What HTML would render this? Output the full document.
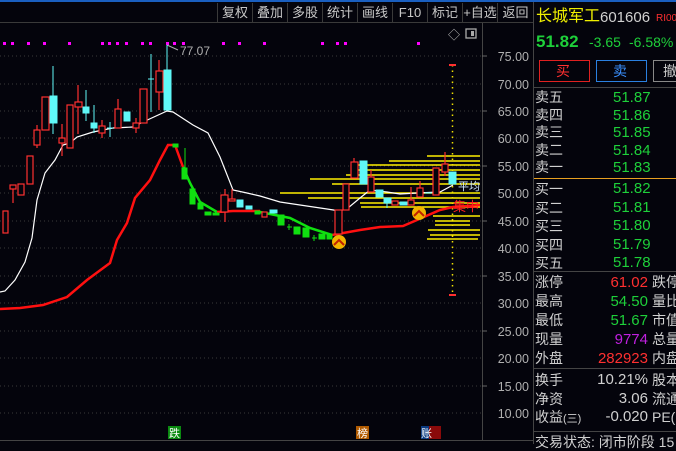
<!DOCTYPE html>
<html><head><meta charset="utf-8"><style>
*{margin:0;padding:0}
body{width:676px;height:444px;background:#04040c;overflow:hidden;position:relative;font-family:"Liberation Sans","Noto Sans CJK SC",sans-serif}
.tb{position:absolute;top:3px;height:19px;color:#c8c8c8;font-size:13px;line-height:19px;text-align:center;border-left:1px solid #3a3a3a}
.r{position:absolute;font-size:14px;line-height:17px;color:#d0d0d0}
.n{font-size:15px}
.g{color:#1ed03a}.rd{color:#ff3030}
</style></head><body>
<div style="position:absolute;left:0;top:0;width:676px;height:2px;background:#1a5fc0"></div>
<div style="position:absolute;left:0;top:22px;width:533px;height:1px;background:#3a3a3a"></div>
<div class="tb" style="left:217px;width:34px">复权</div>
<div class="tb" style="left:252px;width:34px">叠加</div>
<div class="tb" style="left:287px;width:34px">多股</div>
<div class="tb" style="left:322px;width:34px">统计</div>
<div class="tb" style="left:357px;width:34px">画线</div>
<div class="tb" style="left:392px;width:34px">F10</div>
<div class="tb" style="left:427px;width:34px">标记</div>
<div class="tb" style="left:462px;width:34px">+自选</div>
<div class="tb" style="left:497px;width:35px">返回</div>
<svg width="676" height="444" style="position:absolute;left:0;top:0" font-family="Liberation Sans, Noto Sans CJK SC, sans-serif">
<g stroke="#3a3a3a" stroke-dasharray="1,3">
<line x1="0" y1="56" x2="482" y2="56"/><line x1="0" y1="84" x2="482" y2="84"/><line x1="0" y1="111" x2="482" y2="111"/><line x1="0" y1="138" x2="482" y2="138"/><line x1="0" y1="166" x2="482" y2="166"/><line x1="0" y1="193" x2="482" y2="193"/><line x1="0" y1="221" x2="482" y2="221"/><line x1="0" y1="248" x2="482" y2="248"/><line x1="0" y1="276" x2="482" y2="276"/><line x1="0" y1="303" x2="482" y2="303"/><line x1="0" y1="331" x2="482" y2="331"/><line x1="0" y1="358" x2="482" y2="358"/><line x1="0" y1="386" x2="482" y2="386"/><line x1="0" y1="413" x2="482" y2="413"/>
</g>
<line x1="482.5" y1="23" x2="482.5" y2="441" stroke="#444"/>
<line x1="0" y1="440.5" x2="533" y2="440.5" stroke="#444"/>
<line x1="533.5" y1="2" x2="533.5" y2="444" stroke="#444"/>
<g fill="#b0b0b0" font-size="12.5" text-anchor="end">
<text x="529" y="61">75.00</text><text x="529" y="89">70.00</text><text x="529" y="116">65.00</text><text x="529" y="143">60.00</text><text x="529" y="171">55.00</text><text x="529" y="198">50.00</text><text x="529" y="226">45.00</text><text x="529" y="253">40.00</text><text x="529" y="281">35.00</text><text x="529" y="308">30.00</text><text x="529" y="336">25.00</text><text x="529" y="363">20.00</text><text x="529" y="391">15.00</text><text x="529" y="418">10.00</text>
</g>
<g stroke="#666"><line x1="482" y1="56" x2="487" y2="56"/><line x1="482" y1="111" x2="487" y2="111"/><line x1="482" y1="166" x2="487" y2="166"/><line x1="482" y1="221" x2="487" y2="221"/><line x1="482" y1="276" x2="487" y2="276"/><line x1="482" y1="331" x2="487" y2="331"/><line x1="482" y1="386" x2="487" y2="386"/></g>
<text x="448" y="39" fill="#bbb" font-size="12">◇</text>
<rect x="466" y="29" width="10" height="9" fill="none" stroke="#aaa" stroke-width="1.3"/><rect x="471" y="31" width="3" height="5" fill="#aaa"/>
<g fill="#ff00ff">
<rect x="3" y="42" width="3" height="3"/><rect x="11" y="42" width="3" height="3"/><rect x="27" y="42" width="3" height="3"/><rect x="43" y="42" width="3" height="3"/><rect x="68" y="42" width="3" height="3"/><rect x="101" y="42" width="3" height="3"/><rect x="108" y="42" width="3" height="3"/><rect x="116" y="42" width="3" height="3"/><rect x="125" y="42" width="3" height="3"/><rect x="141" y="42" width="3" height="3"/><rect x="149" y="42" width="3" height="3"/><rect x="166" y="42" width="3" height="3"/><rect x="173" y="42" width="3" height="3"/><rect x="182" y="42" width="3" height="3"/><rect x="222" y="42" width="3" height="3"/><rect x="238" y="42" width="3" height="3"/><rect x="263" y="42" width="3" height="3"/><rect x="321" y="42" width="3" height="3"/><rect x="336" y="42" width="3" height="3"/><rect x="344" y="42" width="3" height="3"/><rect x="417" y="42" width="3" height="3"/>
</g>
<text x="180" y="55" fill="#b0b0b0" font-size="12">77.07</text>
<path d="M167 45 L178 50" stroke="#aaa"/>
<g stroke="#ffee00" stroke-width="1.6">
<line x1="427" y1="156" x2="480" y2="156"/><line x1="389" y1="161" x2="480" y2="161"/><line x1="357" y1="165" x2="480" y2="165"/><line x1="356" y1="170" x2="480" y2="170"/><line x1="346" y1="175" x2="480" y2="175"/><line x1="310" y1="179" x2="480" y2="179"/><line x1="332" y1="184" x2="480" y2="184"/><line x1="280" y1="193" x2="480" y2="193"/><line x1="308" y1="198" x2="480" y2="198"/><line x1="360" y1="203" x2="480" y2="203"/><line x1="361" y1="207" x2="480" y2="207"/><line x1="433" y1="216" x2="480" y2="216"/><line x1="435" y1="221" x2="470" y2="221"/><line x1="435" y1="225" x2="470" y2="225"/><line x1="428" y1="230" x2="480" y2="230"/><line x1="430" y1="235" x2="480" y2="235"/><line x1="427" y1="239" x2="478" y2="239"/>
</g>
<line x1="452.5" y1="65" x2="452.5" y2="295" stroke="#f0e000" stroke-width="1.5" stroke-dasharray="1.5,4"/>
<polyline fill="none" stroke="#fff" stroke-width="1.2" points="0,292 5,291 15,280 25,262 32,238 37,200 45,173 55,160 63,145 70,143 77,137 93,132 113,128 133,127 143,122 167,111 173,112 193,125 208,133 220,157 233,190 247,193 260,196 280,202 300,205 327,209 340,211 348,208 360,198 370,190 387,192 400,194 417,193 440,192 453,185"/>
<polyline fill="none" stroke="#ff1010" stroke-width="2.5" points="0,309 20,308 43,305 67,297 87,280 110,263 117,240 127,223 135,198 150,180 160,160 168,145 175,145 183,167"/>
<polyline fill="none" stroke="#10e010" stroke-width="2.5" points="183,167 190,183 200,202 217,212"/>
<polyline fill="none" stroke="#ff1010" stroke-width="2.5" points="217,212 233,211 260,211"/>
<polyline fill="none" stroke="#10e010" stroke-width="2.5" points="260,212 290,218 310,228 332,235"/>
<polyline fill="none" stroke="#ff1010" stroke-width="2.5" points="332,235 360,230 380,227 403,226 417,220 440,210 453,207 480,205"/>
<g stroke="#ff3030" fill="#04040c" stroke-width="1.2">
<rect x="3" y="211" width="5" height="22"/><line x1="13" y1="189" x2="13" y2="203"/><rect x="10" y="185" width="6" height="4"/><rect x="18" y="184" width="6" height="11"/><rect x="27" y="156" width="6" height="28"/><line x1="37" y1="125" x2="37" y2="148"/><rect x="34" y="130" width="6" height="15"/><rect x="42" y="97" width="7" height="33"/>
<line x1="62" y1="124" x2="62" y2="156"/><rect x="59" y="138" width="6" height="5"/><rect x="67" y="105" width="6" height="43"/><line x1="78" y1="85" x2="78" y2="134"/><rect x="75" y="102" width="7" height="5"/><line x1="102" y1="120" x2="102" y2="138"/><rect x="99" y="126" width="6" height="7"/><line x1="118" y1="99" x2="118" y2="128"/><rect x="115" y="109" width="6" height="19"/><line x1="136" y1="118" x2="136" y2="133"/><rect x="133" y="123" width="6" height="5"/><rect x="140" y="89" width="7" height="34"/><line x1="159" y1="60" x2="159" y2="110"/><rect x="156" y="71" width="7" height="21"/>
<line x1="225" y1="189" x2="225" y2="222"/><rect x="221" y="195" width="7" height="17"/><line x1="232" y1="189" x2="232" y2="200"/><rect x="229" y="199" width="6" height="2"/>
<rect x="262" y="212" width="5" height="5"/><rect x="335" y="210" width="7" height="24"/><rect x="343" y="184" width="6" height="26"/><line x1="354" y1="158" x2="354" y2="162"/><rect x="351" y="162" width="7" height="16"/><line x1="371" y1="170" x2="371" y2="177"/><rect x="368" y="177" width="6" height="15"/><rect x="392" y="201" width="6" height="4"/><line x1="411" y1="187" x2="411" y2="200"/><rect x="408" y="200" width="6" height="5"/><line x1="420" y1="181" x2="420" y2="188"/><rect x="417" y="188" width="6" height="9"/><rect x="433" y="168" width="6" height="27"/><line x1="445" y1="152" x2="445" y2="176"/><rect x="442" y="164" width="6" height="8"/>
</g>
<g fill="#5ff8f8" stroke="#5ff8f8">
<line x1="53" y1="66" x2="53" y2="134"/><rect x="50" y="96" width="7" height="27"/><line x1="86" y1="90" x2="86" y2="121"/><rect x="83" y="107" width="6" height="6"/><line x1="94" y1="105" x2="94" y2="133"/><rect x="91" y="123" width="6" height="5"/><line x1="110" y1="122" x2="110" y2="137"/><line x1="107" y1="128" x2="113" y2="128"/><rect x="124" y="112" width="6" height="9"/><line x1="151" y1="54" x2="151" y2="112"/><line x1="148" y1="79" x2="154" y2="79"/><line x1="167" y1="45" x2="167" y2="110"/><rect x="164" y="70" width="7" height="40"/>
<rect x="237" y="200" width="6" height="7"/><rect x="246" y="206" width="6" height="3"/><rect x="270" y="210" width="7" height="3"/><rect x="360" y="161" width="7" height="23"/><rect x="376" y="190" width="7" height="7"/><line x1="387" y1="198" x2="387" y2="208"/><rect x="384" y="198" width="7" height="5"/><rect x="400" y="202" width="7" height="3"/><line x1="425" y1="193" x2="432" y2="193"/><rect x="449" y="172" width="7" height="12"/>
</g>
<g fill="#10e010" stroke="#10e010">
<rect x="173" y="144" width="5" height="3"/><line x1="185" y1="148" x2="185" y2="168"/><rect x="182" y="168" width="5" height="11"/><rect x="190" y="189" width="5" height="15"/><rect x="198" y="203" width="5" height="6"/><rect x="205" y="212" width="6" height="3"/><rect x="213" y="213" width="6" height="2"/><rect x="255" y="211" width="5" height="3"/><rect x="278" y="215" width="6" height="10"/><line x1="287" y1="227" x2="292" y2="227"/><line x1="289" y1="224" x2="289" y2="230"/><rect x="294" y="227" width="6" height="7"/><rect x="303" y="228" width="6" height="9"/><line x1="312" y1="238" x2="317" y2="238"/><line x1="314" y1="235" x2="314" y2="241"/><rect x="319" y="234" width="6" height="5"/><rect x="327" y="234" width="5" height="5"/>
</g>
<text x="458" y="190" fill="#cfe8ff" font-size="11">平均</text>
<text x="453" y="211" fill="#ff2020" font-size="13">集中</text>
<g stroke="#ff3030" stroke-width="2"><line x1="449" y1="65" x2="456" y2="65"/><line x1="449" y1="295" x2="456" y2="295"/></g>
<circle cx="339" cy="242" r="7" fill="#f2b400"/><path d="M334 245 L339 240 L344 245" fill="none" stroke="#c02000" stroke-width="2"/>
<circle cx="419" cy="213" r="7" fill="#f2b400"/><path d="M414 216 L419 211 L424 216" fill="none" stroke="#c02000" stroke-width="2"/>
<rect x="168" y="426" width="13" height="13" fill="#0a8a10"/><text x="169" y="437" fill="#fff" font-size="11">跌</text>
<rect x="356" y="426" width="13" height="13" fill="#b05a00"/><text x="357" y="437" fill="#fff" font-size="11">榜</text>
<rect x="421" y="426" width="9" height="13" fill="#0a3a80"/><rect x="429" y="426" width="12" height="13" fill="#8a0a0a"/><text x="421" y="437" fill="#fff" font-size="11">账</text>
<line x1="534" y1="87.5" x2="676" y2="87.5" stroke="#444"/>
<line x1="534" y1="178.5" x2="676" y2="178.5" stroke="#e8a020"/>
<line x1="534" y1="271.5" x2="676" y2="271.5" stroke="#444"/>
<line x1="534" y1="368.5" x2="676" y2="368.5" stroke="#444"/>
<line x1="534" y1="431.5" x2="676" y2="431.5" stroke="#444"/>
<rect x="539.5" y="60.5" width="50" height="21" fill="none" stroke="#e02020"/>
<rect x="596.5" y="60.5" width="50" height="21" fill="none" stroke="#2a80e0"/>
<rect x="653.5" y="60.5" width="30" height="21" fill="none" stroke="#888"/>
</svg>
<div class="r" style="left:536px;top:8px;color:#f0f000;font-size:16px">长城军工</div>
<div class="r" style="left:600px;top:9px;color:#d0d0d0;font-size:15px">601606</div>
<div class="r" style="left:656px;top:10px;color:#ff3030;font-size:10px">RI00</div>
<div class="r g" style="left:536px;top:32px;font-size:17px;font-weight:bold;line-height:20px">51.82</div>
<div class="r g" style="left:589px;top:34px;font-size:14px">-3.65</div>
<div class="r g" style="left:629px;top:34px;font-size:14px">-6.58%</div>
<div class="r" style="left:556px;top:63px;color:#ff3030">买</div>
<div class="r" style="left:613px;top:63px;color:#3a90ff">卖</div>
<div class="r" style="left:663px;top:63px;color:#ccc">撤</div>
<div class="r" style="left:535px;top:89px;line-height:17.5px">卖五<br>卖四<br>卖三<br>卖二<br>卖一</div>
<div class="r g n" style="left:613px;top:89px;line-height:17.5px">51.87<br>51.86<br>51.85<br>51.84<br>51.83</div>
<div class="r" style="left:535px;top:180px;line-height:18.5px">买一<br>买二<br>买三<br>买四<br>买五</div>
<div class="r g n" style="left:613px;top:180px;line-height:18.5px">51.82<br>51.81<br>51.80<br>51.79<br>51.78</div>
<div class="r" style="left:535px;top:273px;line-height:19px">涨停<br>最高<br>最低<br>现量<br>外盘</div>
<div class="r n" style="left:560px;top:273px;width:88px;text-align:right;line-height:19px"><span class="rd">61.02</span><br><span class="g">54.50</span><br><span class="g">51.67</span><br><span style="color:#c020e0">9774</span><br><span class="rd">282923</span></div>
<div class="r" style="left:652px;top:273px;line-height:19px;white-space:nowrap">跌停<br>量比<br>市值<br>总量<br>内盘</div>
<div class="r" style="left:535px;top:371px;line-height:18.5px">换手<br>净资<br>收益<span style="font-size:11px">(三)</span></div>
<div class="r n" style="left:560px;top:371px;width:88px;text-align:right;line-height:18.5px">10.21%<br>3.06<br>-0.020</div>
<div class="r" style="left:652px;top:371px;line-height:18.5px;white-space:nowrap">股本<br>流通<br>PE(</div>
<div class="r" style="left:535px;top:434px;white-space:nowrap">交易状态: 闭市阶段 15</div>
</body></html>
